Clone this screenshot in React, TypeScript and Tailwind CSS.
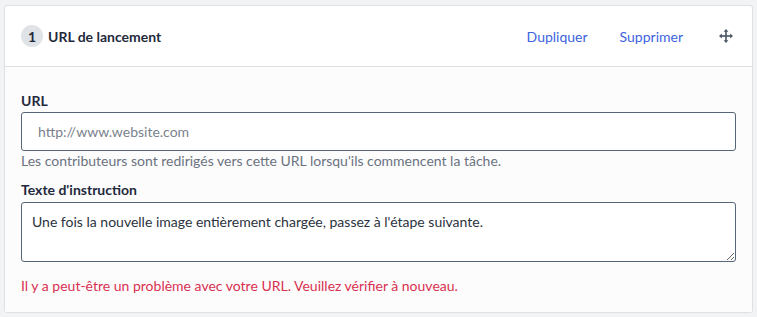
import { useState } from "react";

function MoveIcon() {
  return (
    <svg width="14" height="14" viewBox="0 0 14 14" fill="#4b5563">
      <rect x="6.2" y="2" width="1.6" height="10" />
      <rect x="2" y="6.2" width="10" height="1.6" />
      <polygon points="7,0 9.4,2.8 4.6,2.8" />
      <polygon points="7,14 9.4,11.2 4.6,11.2" />
      <polygon points="0,7 2.8,4.6 2.8,9.4" />
      <polygon points="14,7 11.2,4.6 11.2,9.4" />
    </svg>
  );
}

export default function App() {
  const [instruction, setInstruction] = useState(
    "Une fois la nouvelle image entièrement chargée, passez à l'étape suivante."
  );

  return (
    <div className="w-[757px] h-[317px] bg-[#f1f3f5] pt-[5px] pl-[4px] pr-[4px] font-['Lato','Liberation_Sans',sans-serif]">
      <div className="h-[308px] border border-[#dde1e6] rounded-[3px] bg-white flex flex-col">
        <div className="h-[61px] flex items-center border-b border-[#dde1e6] pl-[16px] pr-[19px]">
          <div className="w-[22px] h-[22px] rounded-full bg-[#dfe2e6] flex items-center justify-center text-[14px] font-bold text-[#1f2a3c]">
            1
          </div>
          <div className="ml-[5px] text-[14px] font-bold text-[#1f2a3c]">URL de lancement</div>
          <div className="ml-auto flex items-center text-[14px] text-[#3d63e0]">
            <span>Dupliquer</span>
            <span className="ml-[32px]">Supprimer</span>
            <span className="ml-[36px] flex"><MoveIcon /></span>
          </div>
        </div>
        <div className="flex-1 bg-[#fcfcfd] pl-[16px] pr-[16px] pt-[26px]">
          <div className="text-[14px] font-bold text-[#1f2a3c] leading-[16px]">URL</div>
          <input
            className="mt-[3px] w-full h-[39px] border border-[#566577] rounded-[3px] bg-white px-[16px] text-[14px] text-[#1f2a3c] placeholder:text-[#7a828c] outline-none"
            placeholder="http://www.website.com"
          />
          <div className="text-[14px] text-[#6b7380] leading-[20px]">
            Les contributeurs sont redirigés vers cette URL lorsqu'ils commencent la tâche.
          </div>
          <div className="mt-[11px] text-[14px] font-bold text-[#1f2a3c] leading-[16px]">Texte d'instruction</div>
          <textarea
            className="mt-[4px] block w-full h-[60px] border border-[#566577] rounded-[3px] bg-white px-[10px] py-[8px] text-[14px] text-[#2b3340] outline-none"
            value={instruction}
            onChange={(e) => setInstruction(e.target.value)}
          />
          <div className="mt-[14px] text-[14px] text-[#d9304f] leading-[20px]">
            Il y a peut-être un problème avec votre URL. Veuillez vérifier à nouveau.
          </div>
        </div>
      </div>
    </div>
  );
}
